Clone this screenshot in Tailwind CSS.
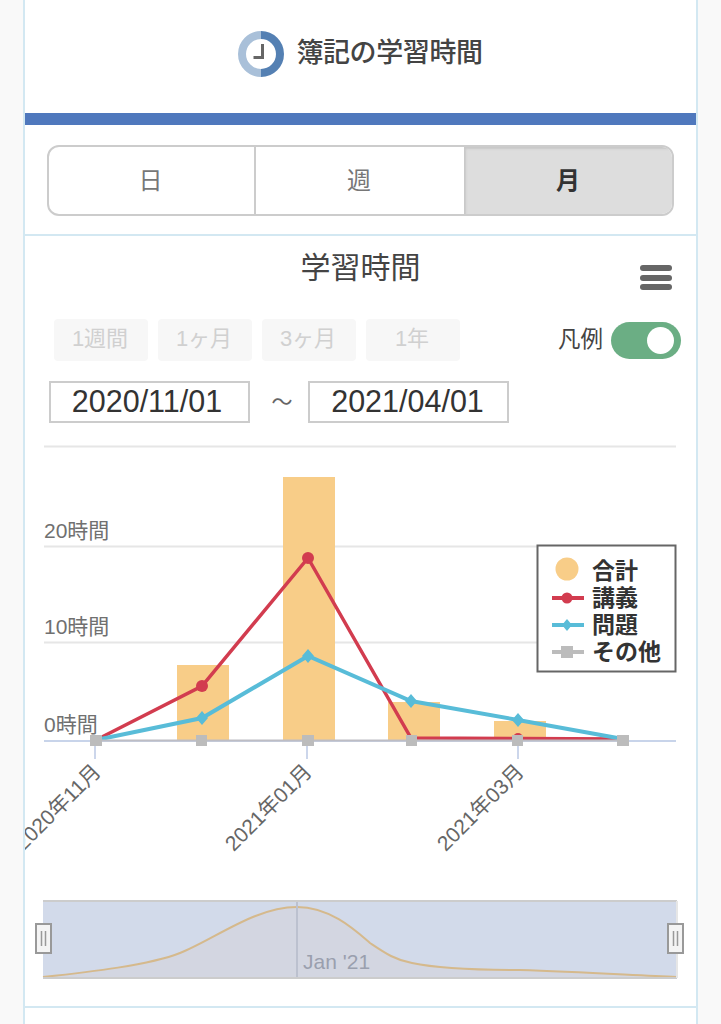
<!doctype html>
<html><head><meta charset="utf-8">
<script src="https://cdn.jsdelivr.net/npm/@tailwindcss/browser@4"></script>
</head>
<body class="bg-[#f9f9f9] overflow-hidden font-['Liberation_Sans','Noto_Sans_CJK_JP',sans-serif]">
<div class="ml-[23px] w-[675px] h-[1024px] bg-white border-x-2 border-[#d3e8f2] overflow-hidden">
  <div class="h-[113px] flex items-center justify-center gap-[12px] pb-[6px]">
    <svg width="46" height="46" viewBox="0 0 46 46"><path d="M23 4a19 19 0 0 0 0 38" fill="none" stroke="#a9c0d9" stroke-width="8"/><path d="M23 4a19 19 0 0 1 0 38" fill="none" stroke="#5480b3" stroke-width="8"/><path d="M24.500 13v13.500h-9" fill="none" stroke="#666" stroke-width="3"/></svg>
    <span class="text-[27px] font-medium text-[#444] tracking-[-0.4px]">簿記の学習時間</span>
  </div>
  <div class="h-[12px] bg-[#4f78bd]"></div>
  <div class="h-[111px] border-b-2 border-[#d3e8f2] pt-[20px] px-[22px]">
    <div class="flex h-[71px] border-2 border-[#cccccc] rounded-[12px] overflow-hidden text-[24px] text-[#777]">
      <div class="w-[207px] border-r-2 border-[#ccc] flex items-center justify-center pr-[2px]">日</div>
      <div class="w-[208px] flex items-center justify-center pr-[2px]">週</div>
      <div class="flex-1 bg-[#dddddd] shadow-[inset_2px_2px_2px_#c8c8c8] flex items-center justify-center font-bold text-[#333]">月</div>
    </div>
  </div>
  <div class="relative h-[788px]">
    <div class="pt-[10px] text-center text-[30px] leading-[44px] text-[#444]">学習時間</div>
    <div class="absolute left-[615px] top-[29px] w-[32px] flex flex-col gap-[3.5px]">
      <div class="h-[6px] rounded-full bg-[#666]"></div><div class="h-[6px] rounded-full bg-[#666]"></div><div class="h-[6px] rounded-full bg-[#666]"></div>
    </div>
    <div class="mt-[29px] ml-[29px] flex items-center gap-[10px] h-[42px] text-[22px] text-[#d0d0d0]">
      <div class="w-[94px] h-[42px] bg-[#f7f7f7] rounded-[4px] flex items-center justify-center pb-[4px] pr-[2px]">1週間</div>
      <div class="w-[94px] h-[42px] bg-[#f7f7f7] rounded-[4px] flex items-center justify-center pb-[4px] pr-[2px]">1ヶ月</div>
      <div class="w-[94px] h-[42px] bg-[#f7f7f7] rounded-[4px] flex items-center justify-center pb-[4px] pr-[2px]">3ヶ月</div>
      <div class="w-[94px] h-[42px] bg-[#f7f7f7] rounded-[4px] flex items-center justify-center pb-[4px] pr-[2px]">1年</div>
      <div class="ml-auto mr-[15px] flex items-center gap-[8px] text-[#444]">
        <span class="text-[22.5px]">凡例</span>
        <div class="w-[70px] h-[37px] rounded-full bg-[#6bae84] flex items-center justify-end pr-[7px]"><div class="w-[27px] h-[27px] rounded-full bg-white"></div></div>
      </div>
    </div>
    <div class="mt-[20px] ml-[24px] flex items-center text-[30.5px] text-[#333]">
      <div class="w-[201px] h-[42px] border-2 border-[#ccc] flex items-center justify-center pr-[5px]">2020/11/01</div>
      <div class="w-[58px] text-center text-[21px] text-[#666] pl-[6px]">～</div>
      <div class="w-[201px] h-[42px] border-2 border-[#ccc] flex items-center justify-center pr-[2px]">2021/04/01</div>
    </div>
    <svg class="absolute left-0 top-[200px]" width="671" height="588" viewBox="25 436 671 588" font-family="'Liberation Sans','Noto Sans CJK JP',sans-serif">
      <line x1="44" x2="676" y1="446.500" y2="446.500" stroke="#e6e6e6" stroke-width="2"/>
      <line x1="44" x2="676" y1="546.500" y2="546.500" stroke="#e6e6e6" stroke-width="2"/>
      <line x1="44" x2="676" y1="642.500" y2="642.500" stroke="#e6e6e6" stroke-width="2"/>
      <g fill="#f8cd88">
        <rect x="177" y="665" width="52" height="75"/>
        <rect x="283" y="477" width="52" height="263"/>
        <rect x="388" y="702" width="52" height="38"/>
        <rect x="494" y="721" width="52" height="19"/>
      </g>
      <line x1="44" x2="676" y1="741" y2="741" stroke="#c8d4ea" stroke-width="2"/>
      <g stroke="#ccd6eb" stroke-width="2"><line x1="95" x2="95" y1="741" y2="759"/><line x1="307" x2="307" y1="741" y2="759"/><line x1="518" x2="518" y1="741" y2="759"/></g>
      <g font-size="21" fill="#707070">
        <text x="44" y="538">20時間</text><text x="44" y="634">10時間</text><text x="44" y="732">0時間</text>
      </g>
      <g font-size="21" fill="#666" text-anchor="end">
        <text transform="translate(102 773) rotate(-45)">2020年11月</text>
        <text transform="translate(313 773) rotate(-45)">2021年01月</text>
        <text transform="translate(525 773) rotate(-45)">2021年03月</text>
      </g>
      <polyline points="96,740 202,686 308,558 411,738 518,738.500 623,739" fill="none" stroke="#d23c4f" stroke-width="3.500"/>
      <g fill="#d23c4f"><circle cx="202" cy="686" r="6"/><circle cx="308" cy="558" r="6"/><circle cx="518" cy="738" r="5"/></g>
      <polyline points="96,740 202,718 308,656 411,701 518,720 623,739" fill="none" stroke="#58bcd8" stroke-width="4"/>
      <g fill="#58bcd8"><path d="M202 711l6 7-6 7-6-7zM308 649l6 7-6 7-6-7zM411 694l6 7-6 7-6-7zM518 713l6 7-6 7-6-7z"/></g>
      <line x1="96" x2="623" y1="740.500" y2="740.500" stroke="#bdbdc4" stroke-width="2"/>
      <g fill="#bcbcbc"><rect x="90" y="735" width="12" height="11"/><rect x="196" y="735" width="11" height="11"/><rect x="302" y="735" width="12" height="11"/><rect x="406" y="735" width="11" height="11"/><rect x="512" y="735" width="11" height="11"/><rect x="617" y="735" width="12" height="11"/></g>
      <rect x="537.500" y="545.500" width="138" height="126" fill="#fff" stroke="#666" stroke-width="2"/>
      <circle cx="567" cy="569" r="11.500" fill="#f8cd88"/>
      <path d="M552 598h32" stroke="#d23c4f" stroke-width="4"/><circle cx="567" cy="598" r="5.500" fill="#d23c4f"/>
      <path d="M552 625h32" stroke="#58bcd8" stroke-width="4"/><path d="M567 619l5 6-5 6-5-6z" fill="#58bcd8"/>
      <path d="M552 652h32" stroke="#bcbcbc" stroke-width="4"/><rect x="561" y="646" width="12" height="12" fill="#bcbcbc"/>
      <g font-size="23" font-weight="700" fill="#333">
        <text x="592" y="579">合計</text><text x="592" y="606">講義</text><text x="592" y="633">問題</text><text x="592" y="660">その他</text>
      </g>
      <rect x="43" y="901" width="634" height="77" fill="#d2daea"/>
      <path d="M43 977C90 972 150 965 180 953C215 939 255 907 297 907C330 907 355 930 370 943C385 953 395 960 412 963C440 969 480 970 520 970C580 972 630 975 677 977V978H43Z" fill="#d3d6e1"/>
      <path d="M43 977C90 972 150 965 180 953C215 939 255 907 297 907C330 907 355 930 370 943C385 953 395 960 412 963C440 969 480 970 520 970C580 972 630 975 677 977" fill="none" stroke="#d5b98c" stroke-width="2"/>
      <line x1="297" x2="297" y1="901" y2="978" stroke="#bcc1cf" stroke-width="2"/>
      <text x="303" y="969" font-size="21" fill="#9a9fae">Jan '21</text>
      <path d="M43 901H677M43 978H677" stroke="#cccccc" stroke-width="2"/>
      <path d="M677 901V978" stroke="#e6e6e6" stroke-width="2"/>
      <g fill="#f4f4f4" stroke="#999" stroke-width="2"><rect x="36" y="924" width="15" height="29"/><rect x="668" y="924" width="15" height="29"/></g>
      <path d="M41.500 931v15M45.500 931v15M673.500 931v15M677.500 931v15" stroke="#999" stroke-width="1.500"/>
      <line x1="25" x2="696" y1="1007" y2="1007" stroke="#d3e8f2" stroke-width="2"/>
    </svg>
  </div>
</div>
</body></html>
